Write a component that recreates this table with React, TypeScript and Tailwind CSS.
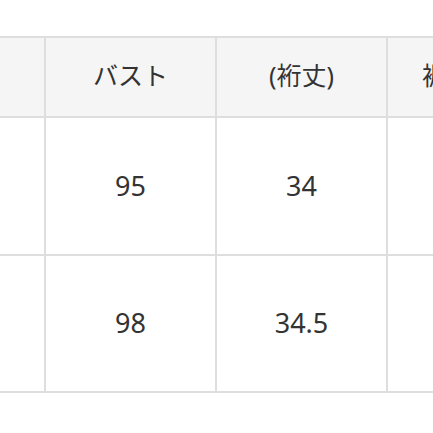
import React from "react";

const cell = "flex items-center justify-center border-r-2 border-b-2 border-[#dedede] text-[#333333]";

export default function App() {
  const header = ["", "バスト", "(裄丈)", "裾幅"];
  const rows = [
    ["", "95", "34", ""],
    ["", "98", "34.5", ""],
  ];
  return (
    <div
      className="w-[433px] h-[433px] overflow-hidden bg-white pt-[36px]"
      style={{ fontFamily: '"Noto Sans", "Noto Sans CJK JP", sans-serif' }}
    >
      <div className="grid grid-cols-[46px_171px_171px_120px] w-[508px] border-t-2 border-[#dedede]">
        {header.map((h, i) => (
          <div key={`h${i}`} className={`${cell} h-[80px] bg-[#f5f5f5] text-[25px]`}>
            <span className="-translate-y-[1px]">{h}</span>
          </div>
        ))}
        {rows.map((r, ri) =>
          r.map((c, ci) => (
            <div
              key={`r${ri}c${ci}`}
              className={`${cell} ${ri === 0 ? "h-[138px]" : "h-[137px]"} bg-white text-[27px]`}
            >
              {c}
            </div>
          ))
        )}
      </div>
    </div>
  );
}
